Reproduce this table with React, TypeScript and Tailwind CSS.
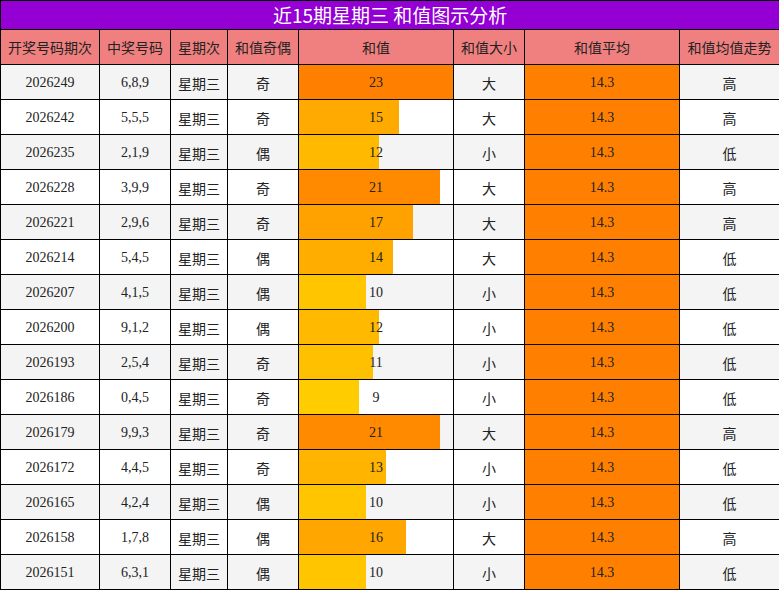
import React from "react";

type Row = {
    issue: string;
    nums: string;
    parity: string;
    sum: number;
    size: string;
    trend: string;
};

const rows: Row[] = [
    { issue: "2026249", nums: "6,8,9", parity: "奇", sum: 23, size: "大", trend: "高" },
    { issue: "2026242", nums: "5,5,5", parity: "奇", sum: 15, size: "大", trend: "高" },
    { issue: "2026235", nums: "2,1,9", parity: "偶", sum: 12, size: "小", trend: "低" },
    { issue: "2026228", nums: "3,9,9", parity: "奇", sum: 21, size: "大", trend: "高" },
    { issue: "2026221", nums: "2,9,6", parity: "奇", sum: 17, size: "大", trend: "高" },
    { issue: "2026214", nums: "5,4,5", parity: "偶", sum: 14, size: "大", trend: "低" },
    { issue: "2026207", nums: "4,1,5", parity: "偶", sum: 10, size: "小", trend: "低" },
    { issue: "2026200", nums: "9,1,2", parity: "偶", sum: 12, size: "小", trend: "低" },
    { issue: "2026193", nums: "2,5,4", parity: "奇", sum: 11, size: "小", trend: "低" },
    { issue: "2026186", nums: "0,4,5", parity: "奇", sum: 9, size: "小", trend: "低" },
    { issue: "2026179", nums: "9,9,3", parity: "奇", sum: 21, size: "大", trend: "高" },
    { issue: "2026172", nums: "4,4,5", parity: "奇", sum: 13, size: "小", trend: "低" },
    { issue: "2026165", nums: "4,2,4", parity: "偶", sum: 10, size: "小", trend: "低" },
    { issue: "2026158", nums: "1,7,8", parity: "偶", sum: 16, size: "大", trend: "高" },
    { issue: "2026151", nums: "6,3,1", parity: "偶", sum: 10, size: "小", trend: "低" },
];

const maxSum = 23;

// bar colour gets lighter as the sum goes down
const barColor: Record<number, string> = {
    23: "bg-[#ff8000]",
    21: "bg-[#ff8a00]",
    17: "bg-[#ffa200]",
    16: "bg-[#ffa600]",
    15: "bg-[#ffaa00]",
    14: "bg-[#ffae00]",
    13: "bg-[#ffb400]",
    12: "bg-[#ffba00]",
    11: "bg-[#ffc000]",
    10: "bg-[#ffc600]",
    9: "bg-[#ffcc00]",
};

const headers = ["开奖号码期次", "中奖号码", "星期次", "和值奇偶", "和值", "和值大小", "和值平均", "和值均值走势"];

const serif = "font-['Liberation_Serif','Noto_Sans_CJK_SC',serif]";
const cjk = "font-['Noto_Sans_CJK_SC',sans-serif]";

export default function App() {
    return (
        <div className="w-[779px] h-[590px] bg-white">
            <table className="w-[779px] table-fixed border-collapse text-[14px] text-[#222]">
                <colgroup>
                    <col className="w-[99px]" />
                    <col className="w-[71px]" />
                    <col className="w-[57px]" />
                    <col className="w-[71px]" />
                    <col className="w-[155px]" />
                    <col className="w-[71px]" />
                    <col className="w-[155px]" />
                    <col className="w-[100px]" />
                </colgroup>
                <thead>
                    <tr>
                        <th
                            colSpan={8}
                            className={`h-[29px] p-0 border border-black bg-[#9400d3] text-white text-[19px] leading-[28px] font-normal ${cjk}`}
                        >
                            近15期星期三 和值图示分析
                        </th>
                    </tr>
                    <tr>
                        {headers.map((h) => (
                            <th
                                key={h}
                                className={`h-[35px] p-0 border border-black bg-[#f08080] font-normal ${cjk}`}
                            >
                                {h}
                            </th>
                        ))}
                    </tr>
                </thead>
                <tbody>
                    {rows.map((r, i) => (
                        <tr key={r.issue} className={i % 2 === 0 ? "bg-[#f4f4f4]" : "bg-white"}>
                            <td className={`h-[35px] p-0 border border-black text-center ${serif}`}>{r.issue}</td>
                            <td className={`p-0 border border-black text-center ${serif}`}>{r.nums}</td>
                            <td className={`p-0 border border-black text-center ${cjk} pt-[3px]`}>星期三</td>
                            <td className={`p-0 border border-black text-center ${cjk} pt-[3px]`}>{r.parity}</td>
                            <td className="p-0 border border-black h-[35px]">
                                <div className="relative h-[34px] flex items-center justify-center">
                                    <div
                                        className={`absolute left-0 top-0 bottom-0 ${barColor[r.sum]}`}
                                        style={{ width: `${(r.sum / maxSum) * 100}%` }}
                                    />
                                    <span className={`relative ${serif}`}>{r.sum}</span>
                                </div>
                            </td>
                            <td className={`p-0 border border-black text-center ${cjk} pt-[3px]`}>{r.size}</td>
                            <td className={`p-0 border border-black text-center bg-[#ff8000] ${serif}`}>14.3</td>
                            <td className={`p-0 border border-black text-center ${cjk} pt-[3px]`}>{r.trend}</td>
                        </tr>
                    ))}
                </tbody>
            </table>
        </div>
    );
}
